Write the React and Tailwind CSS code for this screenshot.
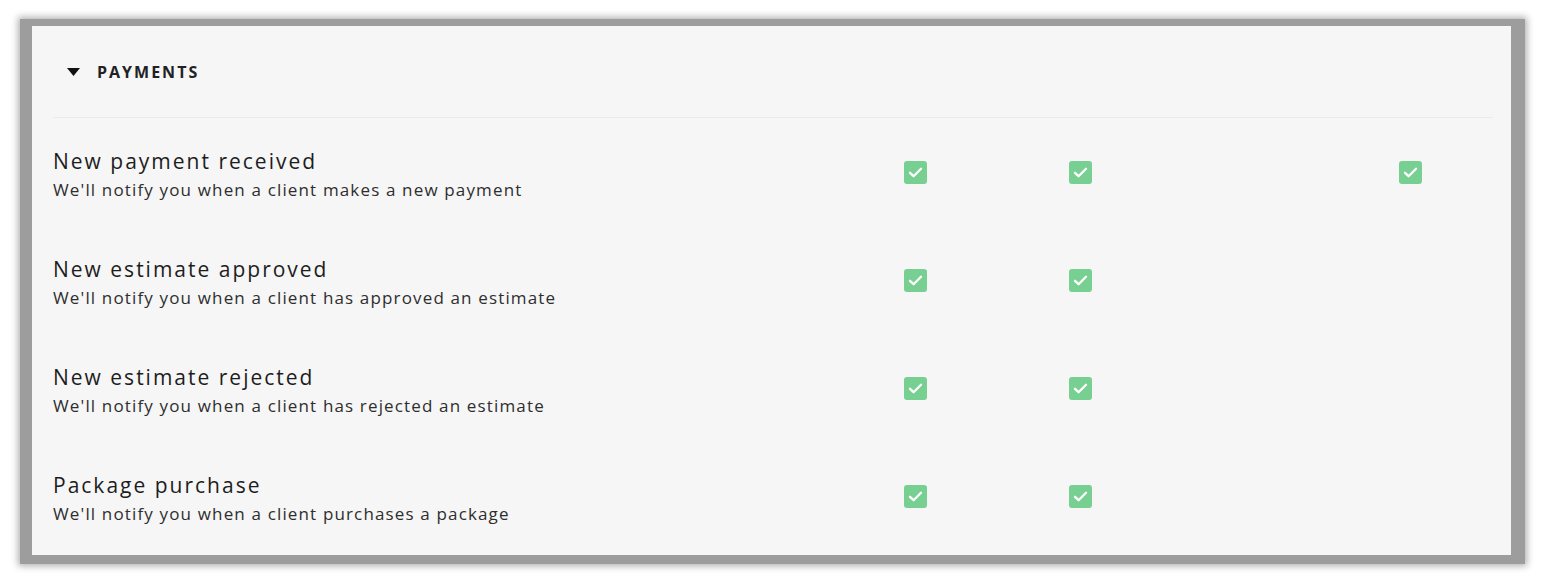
import React from "react";

const rows = [
  {
    title: "New payment received",
    desc: "We'll notify you when a client makes a new payment",
    checks: [true, true, false, true],
  },
  {
    title: "New estimate approved",
    desc: "We'll notify you when a client has approved an estimate",
    checks: [true, true, false, false],
  },
  {
    title: "New estimate rejected",
    desc: "We'll notify you when a client has rejected an estimate",
    checks: [true, true, false, false],
  },
  {
    title: "Package purchase",
    desc: "We'll notify you when a client purchases a package",
    checks: [true, true, false, false],
  },
];

const Check = () => (
  <div className="w-[23px] h-[23px] rounded-[3px] bg-[#78cf92] flex items-center justify-center">
    <svg width="17" height="17" viewBox="0 0 17 17" fill="none">
      <path
        d="M3 8.8 L6.6 12.2 L14 4.8"
        stroke="white"
        strokeWidth="2.3"
        strokeLinecap="round"
        strokeLinejoin="round"
      />
    </svg>
  </div>
);

const App = () => {
  return (
    <div
      className="min-h-[582px] bg-white pl-[20px] pt-[19px]"
      style={{ fontFamily: '"Open Sans", "Liberation Sans", sans-serif' }}
    >
      {/* gray frame */}
      <div className="w-[1505px] bg-[#9d9d9d] pl-[12px] pr-[14px] pt-[7px] pb-[9px] shadow-[0_0_7px_2px_#b0b0b0]">
        <div className="w-[1479px] h-[529px] bg-[#f6f6f6] pl-[21px] pr-[18px]">
          {/* Header */}
          <div className="h-[92px] flex items-center pl-[14px] border-b border-[#ebebeb]">
            <svg width="13" height="8" viewBox="0 0 13 8" className="mt-[1px]">
              <path d="M0 0 H13 L6.5 8 Z" fill="#111" />
            </svg>
            <span className="ml-[17px] text-[16px] font-bold tracking-[2px] text-[#222]">
              PAYMENTS
            </span>
          </div>

          {/* Rows */}
          {rows.map((row) => (
            <div key={row.title} className="h-[108px] flex items-center">
              <div className="flex-1 pt-[6px]">
                <div className="text-[21px] leading-[26px] tracking-[2px] text-[#1d1d1d]">
                  {row.title}
                </div>
                <div className="text-[17px] leading-[24px] tracking-[1.15px] text-[#2e2e2e] mt-[4px]">
                  {row.desc}
                </div>
              </div>
              {row.checks.map((c, i) => (
                <div key={i} className="w-[165px] flex justify-center">
                  {c && <Check />}
                </div>
              ))}
            </div>
          ))}
        </div>
      </div>
    </div>
  );
};

export default App;
